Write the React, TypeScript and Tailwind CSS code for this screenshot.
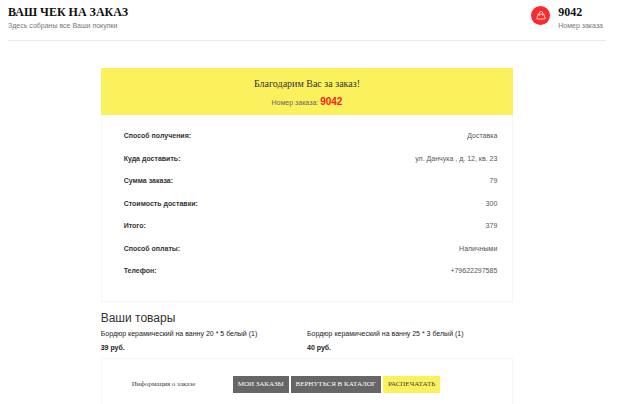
import React from "react";

const details = [
  { label: "Способ получения:", value: "Доставка" },
  { label: "Куда доставить:", value: "ул. Данчука , д. 12, кв. 23" },
  { label: "Сумма заказа:", value: "79" },
  { label: "Стоимость доставки:", value: "300" },
  { label: "Итого:", value: "379" },
  { label: "Способ оплаты:", value: "Наличными" },
  { label: "Телефон:", value: "+79622297585" },
];

const products = [
  { name: "Бордюр керамический на ванну 20 * 5 белый (1)", price: "39 руб." },
  { name: "Бордюр керамический на ванну 25 * 3 белый (1)", price: "40 руб." },
];

const BagIcon: React.FC = () => (
  <svg viewBox="0 0 10 10" className="mb-0.5 size-2.5" fill="none" stroke="#ffd6d6" strokeWidth="0.9" strokeLinejoin="round">
    <path d="M2 4.2h6l1.2 4.8H.8z" />
    <path d="M3.2 6V3.4a1.8 2 0 0 1 3.6 0V6" />
  </svg>
);

const Header: React.FC = () => (
  <header className="flex items-start justify-between border-b border-[#e8e8e8] pt-1 pr-[3px] pb-2">
    <div>
      <h1 className="font-['Liberation_Serif',serif] text-[12px] leading-4 font-bold text-[#111]">
        ВАШ ЧЕК НА ЗАКАЗ
      </h1>
      <p className="text-[7px] leading-3 text-[#777]">Здесь собраны все Ваши покупки</p>
    </div>
    <div className="flex items-start gap-2">
      <span className="mt-0.5 flex size-[19px] items-center justify-center rounded-full bg-[#fb2a2d]">
        <BagIcon />
      </span>
      <div>
        <strong className="block font-['Liberation_Serif',serif] text-[12px] leading-4 text-[#111]">9042</strong>
        <p className="text-[7px] leading-3 text-[#777]">Номер заказа</p>
      </div>
    </div>
  </header>
);

export default function App() {
  return (
    <div className="min-h-screen bg-white pr-[17px] pl-2 font-['Liberation_Sans',sans-serif]">
      <Header />
      <main className="mx-auto mt-[27px] w-[69%]">
        <section>
          <div className="bg-[#fbf15d] pt-2 pb-1 text-center">
            <h2 className="font-['Liberation_Serif',serif] text-[10px] leading-4 text-[#333]">
              Благодарим Вас за заказ!
            </h2>
            <p className="mt-0.5 text-[7px] leading-4 text-[#666]">
              Номер заказа: <strong className="text-[10px] text-[#fb2020]">9042</strong>
            </p>
          </div>
          <dl className="grid min-h-[187px] content-between border border-t-0 border-[#f6f6f6] pt-[15px] pr-[15px] pb-6 pl-[22px] text-[7px] leading-3">
            {details.map((item) => (
              <div key={item.label} className="flex justify-between">
                <dt className="font-bold text-[#333]">{item.label}</dt>
                <dd className="text-[#555]">{item.value}</dd>
              </div>
            ))}
          </dl>
        </section>

        <section className="pt-2">
          <h2 className="text-[12px] leading-4 text-[#333]">Ваши товары</h2>
          <ul className="grid grid-cols-2 text-[7px] text-[#222]">
            {products.map((item) => (
              <li key={item.name}>
                <p className="leading-4 whitespace-nowrap">{item.name}</p>
                <strong className="block leading-3">{item.price}</strong>
              </li>
            ))}
          </ul>
        </section>

        <section className="mt-1 flex items-start border border-b-0 border-[#f6f6f6] pt-[17px] pb-3 pl-[30px] font-['Liberation_Serif',serif] text-[7px]">
          <p className="w-[101px] leading-4 text-[#444]">Информация о заказе</p>
          <div className="flex gap-0.5 whitespace-nowrap">
            <a href="#orders" className="bg-[#666] px-[5px] leading-[17px] text-white">МОИ ЗАКАЗЫ</a>
            <a href="#catalog" className="bg-[#666] px-[5px] leading-[17px] text-white">ВЕРНУТЬСЯ В КАТАЛОГ</a>
            <button type="button" className="bg-[#fbf15d] px-[5px] leading-[17px] text-[#444]">РАСПЕЧАТАТЬ</button>
          </div>
        </section>
      </main>
    </div>
  );
}
